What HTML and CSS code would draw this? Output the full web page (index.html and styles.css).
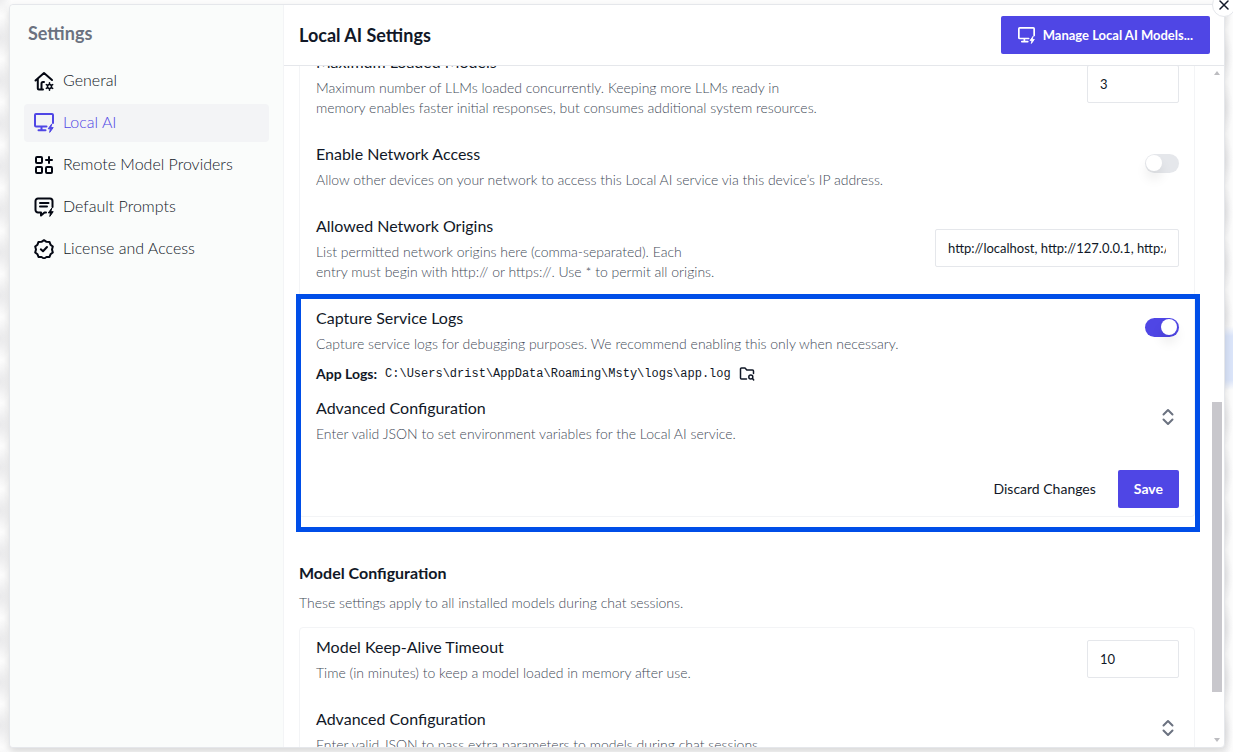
FILE: index.html
```
<!DOCTYPE html>
<html lang="en">
<head>
<meta charset="utf-8">
<title>Settings</title>
<link rel="stylesheet" href="styles.css">
</head>
<body>
<svg class="defs" aria-hidden="true">
  <symbol id="monitor-bolt" viewBox="0 0 20 20">
    <path d="M12.500 13.500H2a1 1 0 0 1-1-1V2a1 1 0 0 1 1-1h16a1 1 0 0 1 1 1v8M7.500 13.500V17M4.500 17.200h7"/>
    <path class="solid" d="M17.600 11.200l-3.400 4.600h2.200l-.7 3.600 3.500-4.800h-2.200z"/>
  </symbol>
  <symbol id="chevrons" viewBox="0 0 14 18">
    <path d="M2.500 6.500L7 2l4.500 4.500M2.500 11.500L7 16l4.500-4.500"/>
  </symbol>
</svg>
<main class="dialog" role="dialog" aria-label="Settings">
  <button class="close" type="button" aria-label="Close">
    <svg viewBox="0 0 12 12"><path d="M2 2l8 8M10 2l-8 8"/></svg>
  </button>
  <aside class="sidebar">
    <h1 class="sidebar-title">Settings</h1>
    <nav class="nav">
      <a class="nav-item" href="#general">
        <svg class="nav-icon" viewBox="0 0 20 20"><path d="M1.500 9.500L10 2l8 7M3.800 8v9.500a1 1 0 0 0 1 1H9M7.500 18v-5.500a1.500 1.500 0 0 1 1.500-1.500h1"/><circle class="gear" cx="15.500" cy="15.500" r="2"/><path class="gear" d="M15.500 11.800v1.500M15.500 17.700v1.500M12.300 13.600l1.300.8M17.400 16.600l1.300.8M18.700 13.600l-1.300.8M13.600 16.600l-1.300.8"/></svg>
        <span class="nav-text">General</span>
      </a>
      <a class="nav-item active" href="#local-ai" aria-current="page">
        <svg class="nav-icon"><use href="#monitor-bolt"/></svg>
        <span class="nav-text">Local AI</span>
      </a>
      <a class="nav-item" href="#providers">
        <svg class="nav-icon" viewBox="0 0 20 20"><rect x="2" y="2" width="6" height="6" rx="1"/><rect x="2" y="12" width="6" height="6" rx="1"/><rect x="12" y="12" width="6" height="6" rx="1"/><path d="M15 2v6M12 5h6"/></svg>
        <span class="nav-text">Remote Model Providers</span>
      </a>
      <a class="nav-item" href="#prompts">
        <svg class="nav-icon" viewBox="0 0 20 20"><path d="M12 15.500h-1.500L7 18.500v-3H4a2.500 2.500 0 0 1-2.500-2.500V4A2.500 2.500 0 0 1 4 1.500h12A2.500 2.500 0 0 1 18.500 4v6M6 6h8.500M6 9.500h7"/><path class="solid" d="M17.600 11.400l-3.300 4.500h2.200l-.7 3.500 3.400-4.700H17z"/></svg>
        <span class="nav-text">Default Prompts</span>
      </a>
      <a class="nav-item" href="#license">
        <svg class="nav-icon" viewBox="0 0 20 20"><path d="M10 1.200l2.500 1.600 3 .1 1 2.800 2.300 1.900-.8 2.900.8 2.900-2.300 1.900-1 2.600-3 .1-2.500 1.500-2.500-1.500-3-.1-1-2.600-2.300-1.900.8-2.900-.8-2.900 2.300-1.900 1-2.800 3-.1z"/><path d="M6.800 10.300l2.200 2 4-4.300"/></svg>
        <span class="nav-text">License and Access</span>
      </a>
    </nav>
  </aside>
  <section class="panel">
    <header class="panel-header">
      <h2 class="panel-title">Local AI Settings</h2>
      <button class="btn primary manage" type="button">
        <svg class="btn-icon"><use href="#monitor-bolt"/></svg>
        Manage Local AI Models...
      </button>
    </header>
    <div class="viewport">
      <div class="content">
        <div class="scrolled">
          <div class="card service">
            <div class="row">
              <div class="text">
                <label class="label" for="max-models">Maximum Loaded Models</label>
                <p class="desc">Maximum number of LLMs loaded concurrently. Keeping more LLMs ready in<br>memory enables faster initial responses, but consumes additional system resources.</p>
              </div>
              <input class="field short" id="max-models" type="text" value="3">
            </div>
            <div class="row">
              <div class="text">
                <label class="label" for="network">Enable Network Access</label>
                <p class="desc">Allow other devices on your network to access this Local AI service via this device’s IP address.</p>
              </div>
              <input class="toggle" id="network" type="checkbox">
            </div>
            <div class="row">
              <div class="text">
                <label class="label" for="origins">Allowed Network Origins</label>
                <p class="desc">List permitted network origins here (comma-separated). Each<br>entry must begin with http:// or https://. Use * to permit all origins.</p>
              </div>
              <input class="field" id="origins" type="text" value="http://localhost, http://127.0.0.1, http://0.0.0.0">
            </div>
            <div class="highlight">
              <div class="row">
                <div class="text">
                  <label class="label" for="capture">Capture Service Logs</label>
                  <p class="desc">Capture service logs for debugging purposes. We recommend enabling this only when necessary.</p>
                </div>
                <input class="toggle" id="capture" type="checkbox" checked>
              </div>
              <div class="logs">
                <strong>App Logs:</strong>
                <code class="path">C:\Users\drist\AppData\Roaming\Msty\logs\app.log</code>
                <button class="icon-btn" type="button" aria-label="Open log folder">
                  <svg class="folder" viewBox="0 0 16 16"><path d="M7.500 13H2.500a1 1 0 0 1-1-1V3a1 1 0 0 1 1-1H6l1.800 2h5.700a1 1 0 0 1 1 1v2.500"/><circle cx="11.800" cy="11" r="2"/><path d="M13.500 12.500l1.200 1.500"/></svg>
                </button>
              </div>
              <div class="row">
                <div class="text">
                  <h3 class="label">Advanced Configuration</h3>
                  <p class="desc">Enter valid JSON to set environment variables for the Local AI service.</p>
                </div>
                <button class="icon-btn expand" type="button" aria-label="Expand service configuration"><svg class="chevrons"><use href="#chevrons"/></svg></button>
              </div>
              <div class="actions">
                <button class="btn" type="button">Discard Changes</button>
                <button class="btn primary" type="button">Save</button>
              </div>
            </div>
          </div>
          <h2 class="section-title">Model Configuration</h2>
          <p class="desc">These settings apply to all installed models during chat sessions.</p>
          <div class="card models">
            <div class="row">
              <div class="text">
                <label class="label" for="timeout">Model Keep-Alive Timeout</label>
                <p class="desc">Time (in minutes) to keep a model loaded in memory after use.</p>
              </div>
              <input class="field short" id="timeout" type="text" value="10">
            </div>
            <div class="row">
              <div class="text">
                <h3 class="label">Advanced Configuration</h3>
                <p class="desc">Enter valid JSON to pass extra parameters to models during chat sessions.</p>
              </div>
              <button class="icon-btn expand" type="button" aria-label="Expand model configuration"><svg class="chevrons"><use href="#chevrons"/></svg></button>
            </div>
          </div>
        </div>
      </div>
      <div class="scrollbar" aria-hidden="true">
        <span class="arrow up"></span>
        <div class="track"><div class="thumb"></div></div>
        <span class="arrow down"></span>
      </div>
    </div>
  </section>
</main>
</body>
</html>
```
FILE: styles.css
```
* {
  box-sizing: border-box;
}

:root {
  --accent: #4f46e5;
  --ink: #111827;
  --muted: #434b58;
  --line: #e5e7eb;
  --faint: #f3f4f6;
}

body {
  margin: 0;
  height: 100vh;
  padding: 4px 8px 4px 9px;
  overflow: hidden;
  color: var(--ink);
  font-family: Lato, "Open Sans", sans-serif;
  font-size: 14px;
  line-height: 20px;
  background:
    linear-gradient(transparent 326px, #dbe5fa 336px, #dbe5fa 380px, transparent 390px) right / 8px 100% no-repeat,
    radial-gradient(closest-side, #e9e9eb, transparent) -12px 16px / 24px 43px repeat-y,
    radial-gradient(closest-side, #ececee, transparent) right 30px / 16px 52px repeat-y,
    #fdfdfd;
}

h1, h2, h3, p {
  margin: 0;
}

button, input {
  margin: 0;
  color: inherit;
  font: inherit;
}

svg {
  fill: none;
  stroke: currentColor;
  stroke-width: 2;
  stroke-linecap: round;
  stroke-linejoin: round;
}

.defs {
  position: absolute;
  width: 0;
  height: 0;
}

.solid {
  fill: currentColor;
  stroke-width: 1;
}

.gear {
  stroke-width: 1.500;
}

.dialog {
  position: relative;
  display: flex;
  height: 100%;
  border: 1px solid var(--line);
  border-radius: 4px;
  background: #fff;
  box-shadow: 0 4px 8px #00000026;
}

.close {
  position: absolute;
  top: -12px;
  right: -12px;
  display: grid;
  place-items: center;
  width: 24px;
  height: 24px;
  padding: 0;
  border: 1px solid var(--line);
  border-radius: 50%;
  background: #fff;
}

.close svg {
  width: 12px;
  height: 12px;
  stroke-width: 1.500;
}

.sidebar {
  flex: none;
  width: 274px;
  padding: 16px 14px;
  border-right: 1px solid var(--faint);
  border-radius: 4px 0 0 4px;
  background: #fafcfb;
}

.sidebar-title {
  padding: 0 4px;
  color: #6b7280;
  font-size: 18px;
  line-height: 24px;
}

.nav {
  display: flex;
  flex-direction: column;
  gap: 4px;
  margin-top: 17px;
}

.nav-item {
  display: flex;
  align-items: center;
  gap: 9px;
  height: 38px;
  padding: 0 10px;
  border-radius: 4px;
  color: #111827;
  font-size: 16px;
  font-weight: 300;
  text-decoration: none;
}

.nav-text {
  padding-bottom: 3px;
}

.nav-icon {
  flex: none;
  width: 20px;
  height: 20px;
  color: #030712;
}

.nav-item.active {
  color: var(--accent);
  background: #f3f4f6;
}

.nav-item.active .nav-icon {
  color: var(--accent);
}

.panel {
  display: flex;
  flex: 1;
  flex-direction: column;
  min-width: 0;
}

.panel-header {
  display: flex;
  align-items: center;
  justify-content: space-between;
  flex: none;
  height: 61px;
  padding: 0 14px 0 15px;
  border-bottom: 1px solid var(--line);
}

.panel-title {
  font-size: 18px;
  line-height: 24px;
}

.btn {
  display: flex;
  align-items: center;
  gap: 8px;
  height: 38px;
  padding: 0 16px;
  border: 0;
  border-radius: 2px;
  background: none;
}

.primary {
  color: #fff;
  font-weight: 700;
  background: var(--accent);
}

.manage {
  padding: 0 17px;
  font-size: 13px;
}

.btn-icon {
  width: 17px;
  height: 17px;
}

.viewport {
  display: flex;
  flex: 1;
  min-height: 0;
}

.content {
  flex: 1;
  min-width: 0;
  overflow: hidden;
}

.scrolled {
  margin-top: -28px;
  padding: 0 14px 0 15px;
}

.card {
  border: 1px solid var(--faint);
  border-radius: 4px;
}

.service {
  border-top: 0;
}

.models {
  margin-top: 14px;
}

.models .row:first-child {
  padding-top: 7px;
}

.row {
  display: flex;
  align-items: center;
  justify-content: space-between;
  gap: 16px;
  padding: 12px 15px 12px 16px;
}

.label {
  display: block;
  margin-bottom: 4px;
  font-size: 16px;
  font-weight: 400;
  line-height: 24px;
}

.desc {
  color: var(--muted);
  font-weight: 300;
}

.field {
  width: 244px;
  height: 38px;
  padding: 0 12px;
  border: 1px solid var(--line);
  border-radius: 2px;
  background: #fff;
  font-size: 13px;
}

.short {
  width: 92px;
}

.toggle {
  flex: none;
  width: 34px;
  height: 19px;
  margin-bottom: 6px;
  border-radius: 10px;
  appearance: none;
  background: var(--line);
}

.toggle::before {
  display: block;
  width: 16px;
  height: 16px;
  margin: 1px;
  border-radius: 50%;
  background: #fff;
  box-shadow: 0 8px 12px #00000014;
  content: "";
}

.toggle:checked {
  background: var(--accent);
}

.toggle:checked::before {
  margin-left: 16px;
}

.highlight {
  position: relative;
  padding-bottom: 8px;
}

.highlight::after {
  position: absolute;
  inset: 0 -6px -16px -4px;
  border: 5px solid #004ee8;
  pointer-events: none;
  content: "";
}

.highlight .row:first-child {
  padding-bottom: 0;
}

.logs {
  display: flex;
  align-items: center;
  gap: 8px;
  margin-top: 10px;
  padding: 0 16px;
}

.path {
  font-family: "Liberation Mono", monospace;
  font-size: 12px;
}

.icon-btn {
  display: flex;
  padding: 0;
  border: 0;
  background: none;
}

.folder {
  width: 16px;
  height: 16px;
  stroke-width: 1.500;
}

.expand {
  margin: 0 4px 6px 0;
  color: #6b7280;
}

.chevrons {
  width: 14px;
  height: 18px;
}

.actions {
  display: flex;
  justify-content: flex-end;
  gap: 6px;
  padding: 14px 15px 0;
}

.section-title {
  margin: 44px 0 8px;
  font-size: 16px;
  line-height: 24px;
}

.scrollbar {
  display: flex;
  flex: none;
  flex-direction: column;
  align-items: center;
  width: 15px;
  padding: 5px 0;
}

.track {
  display: flex;
  flex: 1;
  flex-direction: column;
  justify-content: flex-end;
  width: 10px;
  padding-bottom: 46px;
}

.thumb {
  height: 47%;
  background: #c8c7cc;
}

.arrow {
  border: 3px solid transparent;
}

.up {
  border-top: 0;
  border-bottom: 4px solid #bcbcc0;
}

.down {
  border-top: 4px solid #bcbcc0;
  border-bottom: 0;
}
```
